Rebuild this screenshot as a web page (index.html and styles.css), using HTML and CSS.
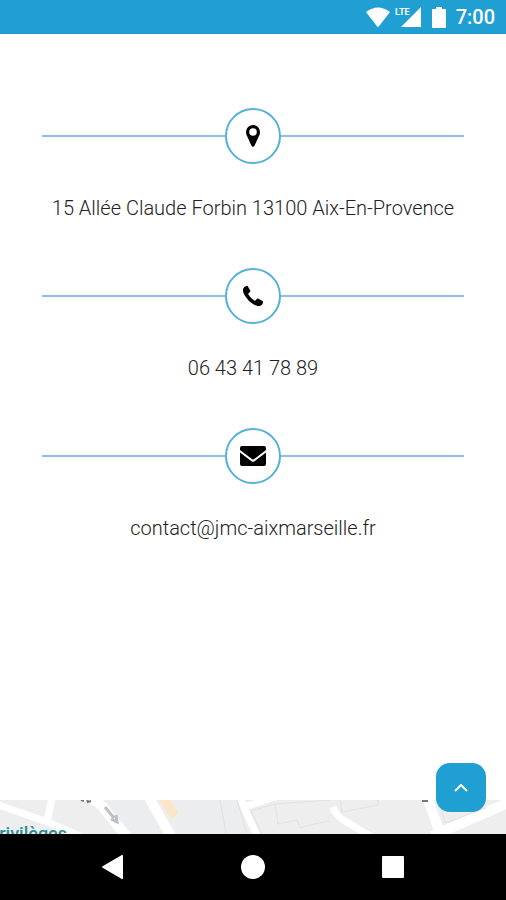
FILE: index.html
```html
<!DOCTYPE html>
<html lang="fr">
  <head>
    <meta charset="utf-8" />
    <meta name="viewport" content="width=device-width, initial-scale=1" />
    <title>Contact</title>
    <link rel="stylesheet" href="styles.css" />
  </head>
  <body>
    <header class="status-bar">
      <svg class="wifi" viewBox="0 0 26 20" aria-hidden="true">
        <path d="M1 5Q13-4 25 5L14 19.200Q13 20.400 12 19.200Z" />
      </svg>
      <div class="signal">
        <span class="lte">LTE</span>
        <svg viewBox="0 0 20 20" aria-hidden="true">
          <path d="M20 0V20H0Z" />
        </svg>
      </div>
      <svg class="battery" viewBox="0 0 14 21" aria-hidden="true">
        <path d="M4 0h6v2h3q1 0 1 1v17q0 1-1 1H1q-1 0-1-1V3q0-1 1-1h3z" />
      </svg>
      <span class="time">7:00</span>
    </header>

    <main class="contact">
      <section class="item">
        <div class="divider">
          <span class="circle">
            <svg class="pin" viewBox="0 0 14 22" aria-hidden="true">
              <path fill-rule="evenodd" d="M7 0a7 7 0 0 1 7 7c0 1.500-.3 2.500-.8 3.500L8.500 20.800Q7 23 5.500 20.800L.8 10.500C.3 9.500 0 8.500 0 7a7 7 0 0 1 7-7zm0 3.200a3.800 3.800 0 1 0 0 7.600 3.800 3.800 0 0 0 0-7.600z" />
            </svg>
          </span>
        </div>
        <p>15 Allée Claude Forbin 13100 Aix-En-Provence</p>
      </section>

      <section class="item">
        <div class="divider">
          <span class="circle">
            <svg class="phone" viewBox="0 0 20 20" aria-hidden="true">
              <path d="M20 15.700c0 .8-.5 2.500-1 3-.8.800-2.300 1.300-3.500 1.300-1.500 0-3.200-.7-5-1.800C6.800 16 4 13.200 1.800 9.500.7 7.700 0 6 0 4.500 0 3.300.5 1.800 1.300 1c.6-.5 2.300-1 3-1 .5 0 .8.700 1.200 1.400l1.900 3.400c.6 1-2.100 2.300-2.100 3.200 0 1.300 5.400 6.700 6.700 6.700.9 0 2.200-2.700 3.200-2.100l3.400 1.900c.7.400 1.400.7 1.400 1.200z" />
            </svg>
          </span>
        </div>
        <p>06 43 41 78 89</p>
      </section>

      <section class="item">
        <div class="divider">
          <span class="circle">
            <svg class="mail" viewBox="0 0 26 20" aria-hidden="true">
              <path d="M2 0h22q2 0 2 2v2L13.800 13.300q-.8.600-1.600 0L0 4V2Q0 0 2 0zM0 6.500L11.500 15.200q1.500 1 3 0L26 6.500V18q0 2-2 2H2q-2 0-2-2z" />
            </svg>
          </span>
        </div>
        <p>contact@jmc-aixmarseille.fr</p>
      </section>
    </main>

    <div class="map">
      <svg viewBox="0 0 506 34" preserveAspectRatio="xMidYMin slice" aria-hidden="true">
        <path class="block" d="M108 0H142L162 34H133ZM172 0H236L248 34H180L174 20L178 14Z" />
        <path class="road" d="M-4 4L50 23L80 36M52-2L47 22" />
        <path class="road wide" d="M84-4Q102 2 108 14L128 38M148-4L172 38" />
        <path class="road" d="M240-2L257 36M244 7L275-3M333 7Q336 16 345 21L372 37" />
        <path class="road wide" d="M427-3L440 33M432 36L510 2" />
        <path class="outline" d="M220 0L226 34M237 0L247 34M262 34L251 11L275 4L278 24L297 20L300 28L314 24L330 21M275 4L330 0M340 0L342 12L378 5V0M439 0L445 23L486 8" />
        <path class="shop" d="M159 0H170L178 13Q175 18 171 19Z" />
        <path class="arrow" d="M105 7L114 18M111 19L117 22L116 15" />
        <path class="mark" d="M81 0L84 1M87 0L88 2L91 1M422 1H428" />
      </svg>
      <span class="place">privilèges</span>
      <button class="to-top" type="button" aria-label="Haut de page">
        <svg viewBox="0 0 14 8" aria-hidden="true">
          <path d="M1 7L7 1L13 7" />
        </svg>
      </button>
    </div>

    <nav class="nav-bar">
      <button type="button" aria-label="Retour">
        <svg viewBox="0 0 24 24" aria-hidden="true">
          <path d="M22 1V23Q22 25 20 23.500L2 13Q0 12 2 11L20 .5Q22-1 22 1Z" />
        </svg>
      </button>
      <button type="button" aria-label="Accueil">
        <svg viewBox="0 0 24 24" aria-hidden="true">
          <circle cx="12" cy="12" r="12" />
        </svg>
      </button>
      <button type="button" aria-label="Applications">
        <svg viewBox="0 0 24 24" aria-hidden="true">
          <rect x="1" y="1" width="22" height="22" rx="1" />
        </svg>
      </button>
    </nav>
  </body>
</html>
```

FILE: styles.css
```css
* {
  box-sizing: border-box;
}
body {
  display: flex;
  flex-direction: column;
  min-height: 100vh;
  margin: 0;
  background-color: #fff;
  color: #222;
  font-family: Roboto, sans-serif;
}
button {
  display: flex;
  align-items: center;
  justify-content: center;
  padding: 0;
  border: 0;
  cursor: pointer;
}

/* status bar */
.status-bar {
  display: flex;
  align-items: center;
  justify-content: flex-end;
  height: 34px;
  padding-right: 11px;
  background-color: #209fd3;
  color: #fff;
}
.status-bar svg {
  display: block;
  fill: #fff;
}
.wifi {
  width: 26px;
  height: 20px;
}
.signal {
  position: relative;
  margin: 0 11px 0 10px;
}
.signal svg {
  width: 20px;
  height: 20px;
}
.lte {
  position: absolute;
  top: 0;
  right: 11px;
  font-size: 9px;
  font-weight: bold;
  line-height: 10px;
}
.battery {
  width: 14px;
  height: 21px;
  margin-right: 10px;
}
.time {
  font-size: 20px;
  font-weight: 500;
}

/* contact details */
.contact {
  flex: 1;
  padding: 74px 42px 44px;
}
.item {
  margin-bottom: 44px;
}
.divider {
  display: flex;
  align-items: center;
}
.divider::before,
.divider::after {
  content: "";
  flex: 1;
  height: 2px;
  background-color: #90bfdf;
}
.circle {
  display: flex;
  align-items: center;
  justify-content: center;
  width: 56px;
  height: 56px;
  border: 2px solid #55b0dc;
  border-radius: 50%;
}
.circle svg {
  fill: #000;
}
.pin {
  width: 14px;
  height: 22px;
}
.phone {
  width: 20px;
  height: 20px;
}
.mail {
  width: 26px;
  height: 20px;
}
.item p {
  margin: 28px 0 0;
  font-size: 20px;
  font-weight: 300;
  line-height: 32px;
  text-align: center;
}

/* map */
.map {
  position: relative;
  height: 34px;
  background-color: #eeeeef;
}
.map > svg {
  display: block;
  width: 100%;
  height: 100%;
}
.map path {
  fill: none;
}
.map .block {
  fill: #ebedef;
}
.road {
  stroke: #fff;
  stroke-width: 7;
}
.wide {
  stroke-width: 10;
}
.outline {
  stroke: #e0e1e2;
}
.map .shop {
  fill: #fbe5c8;
}
.arrow {
  stroke: #b9bfcb;
  stroke-width: 3;
}
.mark {
  stroke: #777;
  stroke-width: 2;
}
.place {
  position: absolute;
  right: calc(100% - 67px);
  bottom: 0;
  height: 10px;
  overflow: hidden;
  color: #2b8f93;
  font-size: 18px;
  font-weight: 500;
  line-height: 20px;
}
.to-top {
  position: absolute;
  right: 20px;
  bottom: 22px;
  width: 50px;
  height: 49px;
  border-radius: 14px;
  background-color: #209fd3;
}
.map .to-top svg {
  width: 14px;
  height: 8px;
}
.map .to-top path {
  stroke: #fff;
  stroke-width: 2;
}

/* navigation bar */
.nav-bar {
  display: flex;
  align-items: center;
  justify-content: center;
  gap: 116px;
  height: 66px;
  background-color: #000;
}
.nav-bar button {
  background-color: transparent;
}
.nav-bar svg {
  width: 24px;
  height: 24px;
  fill: #fff;
}
```
